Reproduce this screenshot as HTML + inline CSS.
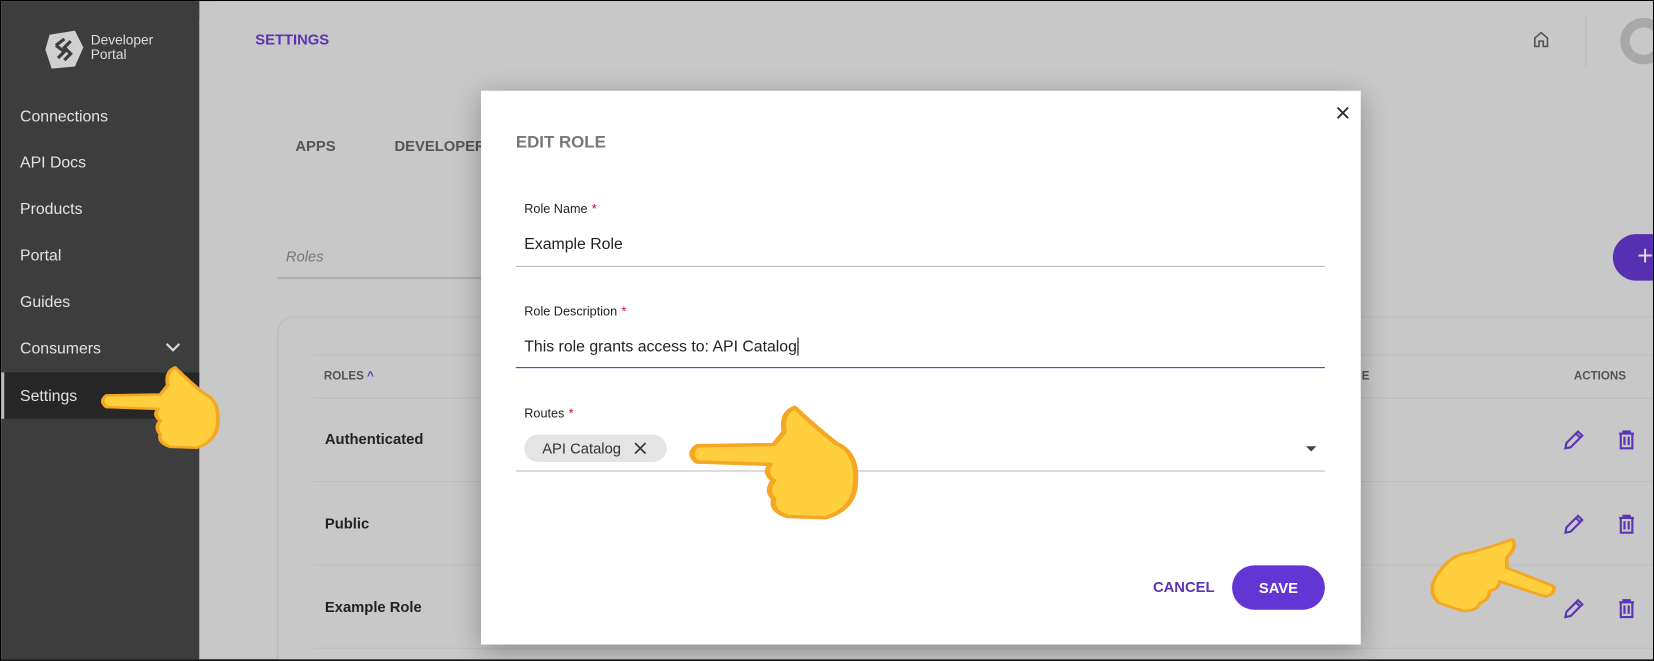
<!DOCTYPE html>
<html><head><meta charset="utf-8"><style>
*{box-sizing:border-box;margin:0;padding:0}
html,body{width:1654px;height:661px;overflow:hidden;background:#000}
#w{position:absolute;left:0;top:0;width:1568px;height:626px;transform:scale(1.05485);transform-origin:0 0;font-family:"Liberation Sans",sans-serif;background:#c8c8c8;overflow:hidden;border:1px solid #000}
.sb{position:absolute;left:0;top:0;width:188px;height:627px;background:#3d3d3d}
.sb .it{position:absolute;left:18px;color:#e2e2e2;font-size:15px}
.main{position:absolute;left:188px;top:0;right:0;bottom:0;background:#c8c8c8;border-top-left-radius:18px}
.abs{position:absolute}
svg{overflow:visible}
.dlg{position:absolute;left:455px;top:85px;width:834px;height:525px;background:#fff;box-shadow:0 6px 24px rgba(0,0,0,.3)}
.lbl{position:absolute;left:41px;font-size:12px;color:#222}
.lbl b{color:#d0021b;font-weight:normal;margin-left:4px}
.val{position:absolute;left:41px;font-size:15px;color:#222}
.ln{position:absolute;left:33px;width:767px;height:1px;background:#bbb}
.hdr{font-size:11px;color:#555;font-weight:bold}
.rowt{position:absolute;left:307px;font-size:14px;font-weight:bold;color:#222}
.hl{position:absolute;left:296px;right:0;height:1px;background:#bdbdbd}
</style></head><body><div id="w">
<div class="sb">
 <svg class="abs" style="left:40px;top:26px" width="40" height="40" viewBox="0 0 40 40"><path d="M6 6 L30 2 L38 18 L30 36 L8 38 L2 20 Z" fill="#d0d0d0"/><path d="M12 16 L20 10 M12 16 L20 22 L14 28 M26 12 L20 18 L26 24 L20 30" stroke="#3d3d3d" stroke-width="3" fill="none"/></svg>
 <div class="abs" style="left:85px;top:30px;color:#ddd;font-size:13px;line-height:14px">Developer<br>Portal</div>
 <div class="it" style="top:101px">Connections</div>
 <div class="it" style="top:145px">API Docs</div>
 <div class="it" style="top:189px">Products</div>
 <div class="it" style="top:233px">Portal</div>
 <div class="it" style="top:277px">Guides</div>
 <div class="it" style="top:321px">Consumers</div>
 <svg class="abs" style="left:155px;top:322px" width="16" height="12"><path d="M2 3 L8 9 L14 3" stroke="#ddd" stroke-width="2" fill="none"/></svg>
 <div class="abs" style="left:0;top:352px;width:188px;height:44px;background:#262626;border-left:3px solid #bbb"></div>
 <div class="it" style="top:366px">Settings</div>
</div>
<div class="main"></div>
<div class="abs" style="left:241px;top:28px;color:#5a34b3;font-weight:bold;font-size:14px">SETTINGS</div>
<svg class="abs" style="left:1451px;top:27px" width="18" height="18" viewBox="0 0 18 18"><path d="M3 16 V8 L9 3 L15 8 V16 H11 V11 H7 V16 Z" stroke="#555" stroke-width="1.5" fill="none"/></svg>
<div class="abs" style="left:1502px;top:13px;width:1px;height:50px;background:#bbb"></div>
<div class="abs" style="left:1535px;top:16px;width:44px;height:44px;border-radius:50%;background:#a8a8a8"></div>
<div class="abs" style="left:1544px;top:25px;width:26px;height:26px;border-radius:50%;background:#c8c8c8"></div>
<div class="abs" style="left:279px;top:129px;font-size:14px;font-weight:bold;color:#555">APPS</div>
<div class="abs" style="left:373px;top:129px;font-size:14px;font-weight:bold;color:#555">DEVELOPERS</div>
<div class="abs" style="left:270px;top:234px;font-size:14px;font-style:italic;color:#777">Roles</div>
<div class="abs" style="left:262px;top:262px;width:200px;height:1px;background:#999"></div>
<div class="abs" style="left:1528px;top:221px;width:40px;height:44px;border-radius:22px 0 0 22px;background:#5530b0"></div>
<div class="abs" style="left:1551px;top:226px;color:#ddd;font-size:26px">+</div>
<div class="abs" style="left:263px;top:300px;width:1305px;height:326px;background:#c8c8c8;border-radius:14px 0 0 0;box-shadow:0 0 2px rgba(0,0,0,.15)"></div>
<div class="hl" style="top:335px"></div>
<div class="abs hdr" style="left:306px;top:350px">ROLES <span style="color:#5a34b3">^</span></div>
<div class="abs hdr" style="left:1491px;top:350px">ACTIONS</div>
<div class="abs hdr" style="left:1290px;top:350px">E</div>
<div class="hl" style="top:376px"></div>
<div class="rowt" style="top:407px">Authenticated</div>
<div class="hl" style="top:455px"></div>
<div class="rowt" style="top:487px">Public</div>
<div class="hl" style="top:534px"></div>
<div class="rowt" style="top:566px">Example Role</div>
<div class="hl" style="top:613px"></div>
<svg width="0" height="0" style="position:absolute"><defs>
<g id="pen"><path d="M2 18 L3 13 L14 2 L18 6 L7 17 Z M12 4 L16 8" stroke="#5a34b3" stroke-width="2" fill="none"/></g>
<g id="bin"><path d="M3 4 H17 M7 4 V2 H13 V4 M4.5 4 V18 H15.5 V4 M8 7 V15 M12 7 V15" stroke="#5a34b3" stroke-width="2" fill="none"/></g>
<g id="hand"><path d="M6 36 Q0 43 6 50 L48 52 Q44 60 50 66 Q45 74 50 82 Q48 92 58 97 L80 98 Q97 90 97 66 Q98 42 86 34 Q74 20 62 3 Q54 8 56 24 L50 35 Z" fill="#ffcf3e" stroke="#f5a623" stroke-width="3" stroke-linejoin="round"/></g>
</defs></svg>
<svg class="abs" style="left:1481px;top:406px" width="20" height="20"><use href="#pen"/></svg>
<svg class="abs" style="left:1531px;top:406px" width="20" height="20"><use href="#bin"/></svg>
<svg class="abs" style="left:1481px;top:486px" width="20" height="20"><use href="#pen"/></svg>
<svg class="abs" style="left:1531px;top:486px" width="20" height="20"><use href="#bin"/></svg>
<svg class="abs" style="left:1481px;top:566px" width="20" height="20"><use href="#pen"/></svg>
<svg class="abs" style="left:1531px;top:566px" width="20" height="20"><use href="#bin"/></svg>

<div class="dlg">
 <svg class="abs" style="left:810px;top:14px" width="14" height="14"><path d="M2 2 L12 12 M12 2 L2 12" stroke="#333" stroke-width="1.8"/></svg>
 <div class="abs" style="left:33px;top:41px;font-size:16px;font-weight:bold;color:#777">EDIT ROLE</div>
 <div class="lbl" style="top:105px">Role Name<b>*</b></div>
 <div class="val" style="top:137px">Example Role</div>
 <div class="ln" style="top:166px"></div>
 <div class="lbl" style="top:202px">Role Description<b>*</b></div>
 <div class="val" style="top:234px">This role grants access to: API Catalog<span style="border-left:1px solid #000;margin-left:1px"></span></div>
 <div class="ln" style="top:262px;height:1px;background:#5a34b3"></div>
 <div class="lbl" style="top:299px">Routes<b>*</b></div>
 <div class="abs" style="left:41px;top:326px;width:135px;height:26px;border-radius:13px;background:#e4e4e4"></div>
 <div class="abs" style="left:58px;top:331px;font-size:14px;color:#333">API Catalog</div>
 <svg class="abs" style="left:145px;top:333px" width="12" height="12"><path d="M1 1 L11 11 M11 1 L1 11" stroke="#333" stroke-width="1.6"/></svg>
 <div class="abs" style="left:782px;top:337px;border-left:5px solid transparent;border-right:5px solid transparent;border-top:5px solid #444"></div>
 <div class="ln" style="top:360px"></div>
 <div class="abs" style="left:637px;top:462px;font-size:14px;font-weight:bold;color:#5a34b3">CANCEL</div>
 <div class="abs" style="left:712px;top:450px;width:88px;height:42px;border-radius:21px;background:#6236d4;color:#fff;font-size:14px;font-weight:bold;text-align:center;line-height:42px">SAVE</div>
</div>
<svg class="abs" style="left:93px;top:345px" width="116" height="80" viewBox="0 0 100 100" preserveAspectRatio="none"><use href="#hand"/></svg>
<svg class="abs" style="left:650px;top:382px" width="165" height="110" viewBox="0 0 100 100" preserveAspectRatio="none"><use href="#hand"/></svg>
<svg class="abs" style="left:1362px;top:508px" width="115" height="80" viewBox="0 0 100 100" preserveAspectRatio="none"><g transform="translate(100 0) scale(-1 1) rotate(-28 50 50)"><use href="#hand"/></g></svg>
</div></body></html>
